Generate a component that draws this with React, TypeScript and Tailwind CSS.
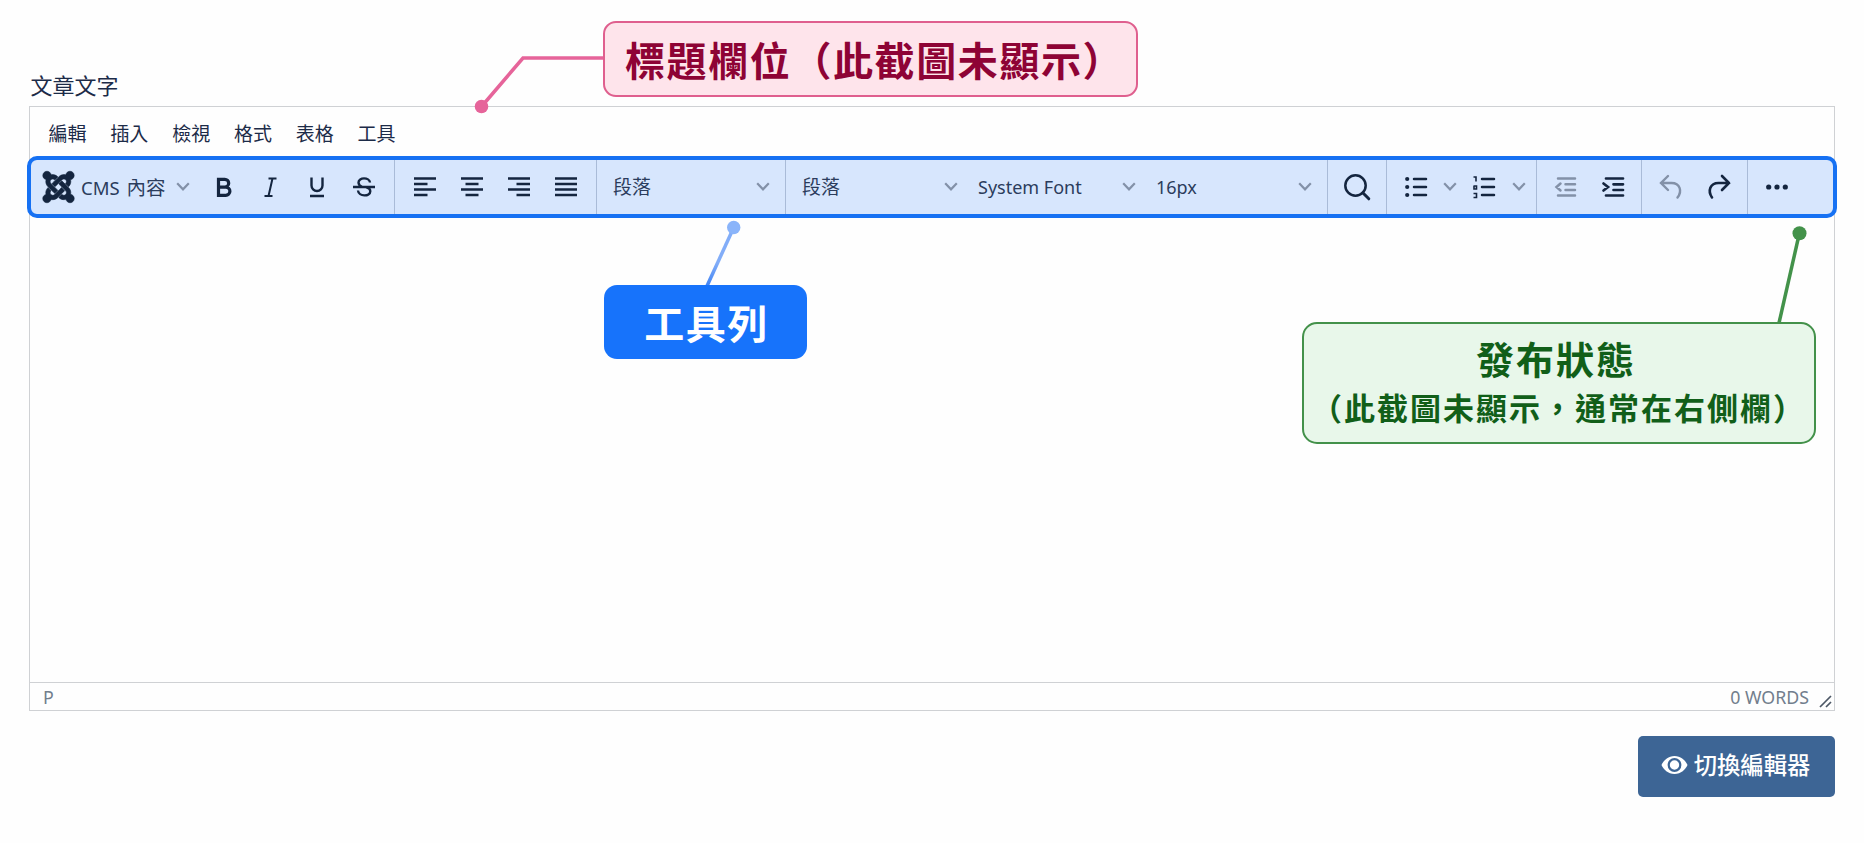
import type { ReactNode } from 'react'
import { FaJoomla } from 'react-icons/fa'

const INK = '#14253f'
const MUTED = '#8391a8'

function Icon({ w = 22, color = INK, sw = 2.2, className = '', children }: { w?: number; color?: string; sw?: number; className?: string; children: ReactNode }) {
  return (
    <svg
      width={w}
      height={w}
      viewBox={`0 0 ${w} ${w}`}
      fill="none"
      stroke={color}
      strokeWidth={sw}
      className={`block shrink-0 overflow-visible ${className}`}
    >
      {children}
    </svg>
  )
}

function Chevron({ className = '' }: { className?: string }) {
  return (
    <svg width="14" height="9" viewBox="0 0 14 9" className={`block shrink-0 ${className}`} fill="none" stroke={MUTED} strokeWidth="2.2">
      <path d="M1.2 1.3 7 7.3l5.8-6" />
    </svg>
  )
}

function Group({ className, children }: { className: string; children: ReactNode }) {
  return <div className={`flex h-full shrink-0 items-center border-r border-[#a9bbd8] pb-px ${className}`}>{children}</div>
}

function Select({ label, className }: { label: string; className: string }) {
  return (
    <div className={`flex shrink-0 items-center justify-between ${className}`}>
      <span className="relative top-px">{label}</span>
      <Chevron />
    </div>
  )
}

const menus = ['編輯', '插入', '檢視', '格式', '表格', '工具']

const aligns = [
  'M0 2.5h22M0 8h13.5M0 13.5h22M0 19h13.5',
  'M0 2.5h22M4.5 8h13M0 13.5h22M4.5 19h13',
  'M0 2.5h22M8.5 8H22M0 13.5h22M8.5 19H22',
  'M0 2.5h22M0 8h22M0 13.5h22M0 19h22',
]

function Toolbar() {
  return (
    <div className="-mx-[3px] flex h-[62px] shrink-0 items-center rounded-[10px] border-4 border-[#1671f3] bg-[#d7e6fd] text-[18px] text-[#2b3c5c]">
      <Group className="w-[364px]">
        <FaJoomla className="ml-[10px] h-[36px] w-[35px] shrink-0 overflow-visible" color={INK} stroke={INK} strokeWidth={8} strokeLinejoin="round" />
        <span className="relative top-px ml-[5px] w-[86px] text-[18.5px] whitespace-nowrap">
          CMS <span className="ml-[2px] text-[19.5px]">內容</span>
        </span>
        <Chevron className="ml-[9px]" />
        <Icon className="ml-[24px]" sw={3.2}>
          <path d="M4.5 3.3h6.3a3.9 3.9 0 0 1 0 7.8H4.5zM4.5 11.1h7.3a4.1 4.1 0 0 1 0 8.2H4.5z" />
        </Icon>
        <Icon className="ml-[24px]" sw={2}>
          <path d="M8.5 2.5h8M4.5 20h8M12.5 2.5 8.5 20" />
        </Icon>
        <Icon className="ml-[24px]" sw={2.4}>
          <path d="M5.5 1.5v8a5.5 5.5 0 0 0 11 0v-8M4 20h14" />
        </Icon>
        <Icon className="ml-[25px]" sw={2.4}>
          <path d="M17 6.5C16.5 1 5.5 1 5.5 6.5c0 2 1.5 3.5 4 4.500M13 11c3 1 4.3 2.4 4.3 4.2 0 5.7-11.8 5.7-12.3-.7M0 11h22" />
        </Icon>
      </Group>
      <Group className="w-[202px] gap-[25px] pl-[19px]">
        {aligns.map((d) => (
          <Icon key={d} sw={2.6}>
            <path d={d} />
          </Icon>
        ))}
      </Group>
      <Group className="w-[189px] pl-[16px]">
        <Select label="段落" className="w-[157px] text-[19px]" />
      </Group>
      <Group className="w-[542px] pl-[16px]">
        <Select label="段落" className="w-[156px] text-[19px]" />
        <Select label="System Font" className="ml-[20px] w-[158px]" />
        <Select label="16px" className="ml-[20px] w-[156px]" />
      </Group>
      <Group className="w-[59px] pl-[16px]">
        <Icon w={26} sw={2.5}>
          <circle cx="11.5" cy="11.5" r="10.2" />
          <path d="m18.8 18.8 6 6" strokeWidth="3" strokeLinecap="round" />
        </Icon>
      </Group>
      <Group className="w-[150px] pl-[18px]">
        <Icon sw={2.5}>
          <path d="M9 3h12M9 11h12M9 19h12" strokeLinecap="round" />
          <g fill={INK} stroke="none">
            <circle cx="2.2" cy="3" r="2.1" />
            <circle cx="2.2" cy="11" r="2.1" />
            <circle cx="2.2" cy="19" r="2.1" />
          </g>
        </Icon>
        <Chevron className="ml-[16px]" />
        <Icon className="ml-[16px]" sw={2.5}>
          <path d="M9 3h12M9 11h12M9 19h12" strokeLinecap="round" />
          <path d="M.5 1H3v4.500M1 9.500v3.500h2.500V10H1M.5 17.500h3v4H.5" strokeWidth="1.6" />
        </Icon>
        <Chevron className="ml-[17px]" />
      </Group>
      <Group className="w-[105px] gap-[25px] pl-[18px]">
        <Icon sw={2.5} color={MUTED}>
          <path d="M3 2.5h17M10.5 8.3H20M10.5 14H20M3 19.5h17M5.5 7.5 1.5 11l4 3.5" strokeLinecap="round" />
        </Icon>
        <Icon sw={2.7}>
          <path d="M4 2.5h17M11.5 8.3H21M11.5 14H21M4 19.5h17M1.5 7.5 6 11l-4.5 3.5" strokeLinecap="round" />
        </Icon>
      </Group>
      <Group className="w-[106px] gap-[26px] pl-[18px]">
        <Icon sw={2.4} color={MUTED}>
          <path d="M8 0 1 7l7 7M1 7h10.5c8.5 0 11 8 6 14.5" strokeLinecap="round" />
        </Icon>
        <Icon sw={2.6}>
          <path d="m14 0 7 7-7 7M21 7H10.5C2 7-.5 15 4 21.5" strokeLinecap="round" />
        </Icon>
      </Group>
      <Icon className="ml-[18px]">
        <g fill={INK} stroke="none">
          <circle cx="2.7" cy="11" r="2.6" />
          <circle cx="11" cy="11" r="2.6" />
          <circle cx="19.3" cy="11" r="2.6" />
        </g>
      </Icon>
    </div>
  )
}

function Callouts() {
  return (
    <>
      <svg className="pointer-events-none absolute inset-0" width="1864" height="843" fill="none" strokeWidth="3.5">
        <defs>
          <linearGradient id="lead" x1="0" y1="1" x2="0" y2="0">
            <stop offset="0" stopColor="#3f83f5" />
            <stop offset=".4" stopColor="#82adf8" />
          </linearGradient>
        </defs>
        <path d="M604 58h-81l-41 48" stroke="#e6649a" />
        <circle cx="481.5" cy="106.5" r="6.8" fill="#e6649a" />
        <path d="m707 286 26.5-58" stroke="url(#lead)" />
        <circle cx="733.7" cy="227.5" r="6.7" fill="#8ab4fa" />
        <path d="m1779 323 20-88" stroke="#43924a" />
        <circle cx="1799.5" cy="233.3" r="7" fill="#43924a" />
      </svg>
      <div className="absolute top-[21px] left-[603px] flex h-[76px] w-[535px] items-center rounded-[13px] border-2 border-[#df5f8e] bg-[#fee4eb] pt-[4px] pl-[20px] text-[40px] font-bold tracking-[1.6px] whitespace-nowrap text-[#8e0335]">
        標題欄位（此截圖未顯示）
      </div>
      <div className="absolute top-[285px] left-[604px] flex h-[74px] w-[203px] items-center justify-center rounded-[13px] bg-[#1773fb] pt-[3px] pl-[2px] text-[40px] font-bold tracking-[1.5px] text-white">
        工具列
      </div>
      <div className="absolute top-[322px] left-[1302px] flex h-[122px] w-[514px] flex-col items-center justify-center rounded-[15px] border-2 border-[#43914a] bg-[#e8f7ea] pt-px font-bold whitespace-nowrap text-[#115f19]">
        <div className="pr-[6px] text-[38px] leading-[49px] tracking-[2px]">發布狀態</div>
        <div className="pr-px text-[31px] leading-[48px] tracking-[2px]">（此截圖未顯示，通常在右側欄）</div>
      </div>
    </>
  )
}

export default function App() {
  return (
    <div className="relative flex h-[843px] w-[1864px] flex-col overflow-hidden bg-[#fefefe] px-[29px] font-['Noto_Sans','Noto_Sans_CJK_TC',sans-serif] text-[#1c2b48]">
      <div className="mt-[69px] h-[37px] pl-[1.5px] text-[22px] leading-[32px]">文章文字</div>
      <div className="flex h-[605px] flex-col border border-[#cfd1d4]">
        <div className="flex h-[49px] shrink-0 items-center gap-[23.8px] pt-[6px] pl-[18.5px] text-[19px]">
          {menus.map((m) => (
            <span key={m}>{m}</span>
          ))}
        </div>
        <Toolbar />
        <div className="flex-1" />
        <div className="relative flex h-[28px] shrink-0 items-center justify-between border-t border-[#cfd1d4] pt-px pr-[25px] pl-[13px] text-[17.8px] text-[#727e8d]">
          <span>P</span>
          <span>0 WORDS</span>
          <svg className="absolute right-[2px] bottom-[2px]" width="13" height="13" fill="none" stroke="#4d5866" strokeWidth="1.7">
            <path d="M1 12 12 1M7 12l5-5" />
          </svg>
        </div>
      </div>
      <button className="mt-[25px] flex h-[61px] w-[197px] shrink-0 items-center justify-center gap-[6px] self-end rounded-[5px] bg-[#3d6595] pr-[2px] pb-[3px] text-[23.3px] font-medium whitespace-nowrap text-white">
        <svg width="27" height="20" viewBox="0 0 27 20">
          <path fill="white" d="M13.5 1C7 1 2.5 5.5.5 10c2 4.5 6.5 9 13 9s11-4.5 13-9c-2-4.5-6.5-9-13-9Z" />
          <circle cx="13.5" cy="10" r="5.8" fill="white" stroke="#3d6595" strokeWidth="2.2" />
        </svg>
        切換編輯器
      </button>
      <Callouts />
    </div>
  )
}
